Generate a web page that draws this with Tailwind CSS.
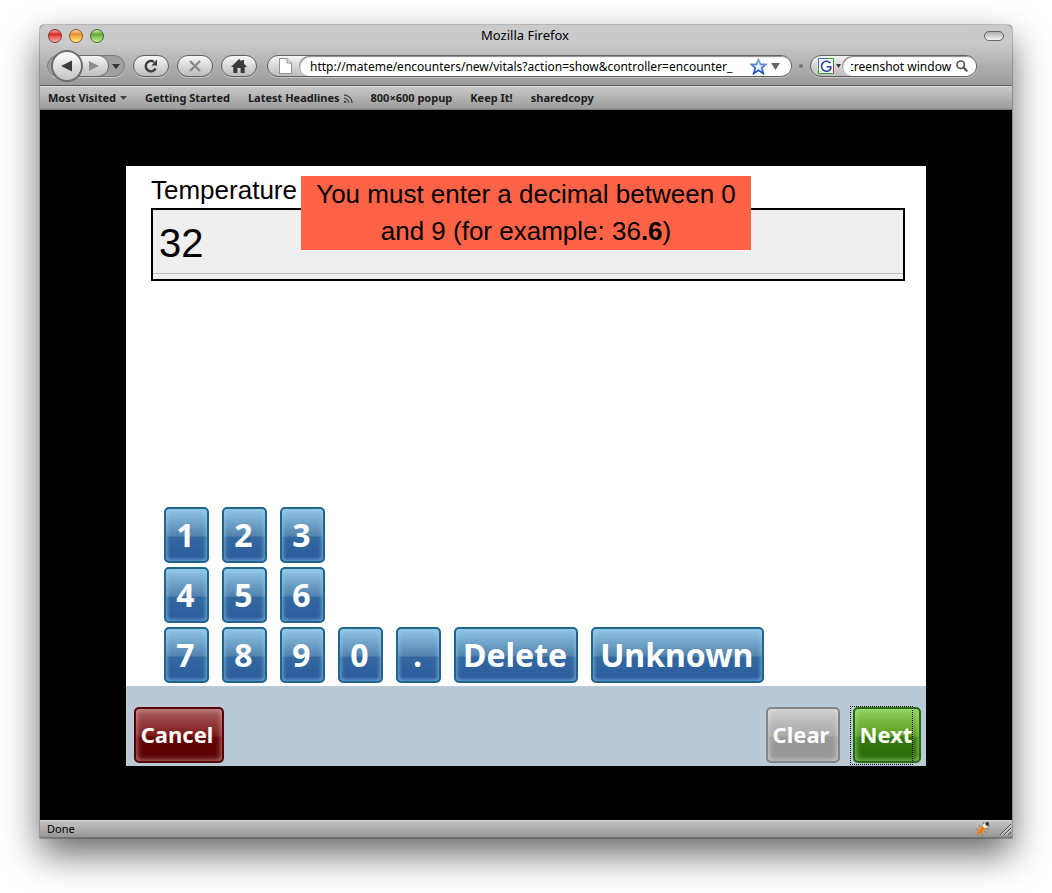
<!DOCTYPE html>
<html lang="en">
<head>
<meta charset="utf-8">
<meta name="viewport" content="width=device-width, initial-scale=1">
<title>Mozilla Firefox</title>
<script src="https://cdn.jsdelivr.net/npm/@tailwindcss/browser@4"></script>
</head>
<body class="flex min-h-screen flex-col bg-white px-10 pt-[25px] pb-[55px] font-['Noto_Sans',sans-serif] text-black">
<div class="flex flex-1 flex-col rounded-t-[4px] bg-black shadow-[0_16px_36px_rgba(0,0,0,0.6),0_0_0_1px_rgba(0,0,0,0.2)]">

  <header class="rounded-t-[4px] border-b border-[#5f5f5f] bg-linear-to-b from-[#cacaca] from-30% to-[#999999]">
    <div class="flex h-6 items-center px-2 pb-[2px]">
      <div class="flex gap-[7px]">
        <button aria-label="Close" class="h-[14px] w-[14px] rounded-full border border-[#7c3434] bg-linear-to-b from-[#f8a0a0] via-[#dc1c22] via-35% to-[#ffb0b0]"></button>
        <button aria-label="Minimize" class="h-[14px] w-[14px] rounded-full border border-[#87572a] bg-linear-to-b from-[#fbd9a8] via-[#e8902c] via-35% to-[#fff27c]"></button>
        <button aria-label="Zoom" class="h-[14px] w-[14px] rounded-full border border-[#3a6530] bg-linear-to-b from-[#cfeeb8] via-[#5fa83a] via-35% to-[#d0f78c]"></button>
      </div>
      <h1 class="flex-1 pr-[38px] text-center text-[13px]">Mozilla Firefox</h1>
      <button aria-label="Toggle toolbar" class="h-[10px] w-5 rounded-full border border-[#666] bg-linear-to-b from-[#b0b0b0] to-[#f4f4f4]"></button>
    </div>

    <div class="flex h-9 items-center gap-2 pt-[2px] pr-[35px] pb-[4px] pl-[7px]">
      <div class="flex h-[22px] w-[78px] items-center rounded-full border border-[#777] bg-[#a0a0a0] pl-[3px] shadow-[0_1px_0_#c8c8c8]">
        <button aria-label="Back" class="z-10 flex h-8 w-8 shrink-0 items-center justify-center rounded-full border-2 border-[#6c6c6c] bg-linear-to-b from-white to-[#c4c4c4]">
          <svg class="h-3 w-3" viewBox="0 0 12 12"><path d="M0 6 11 .5v11z" fill="#3b3b3b"/></svg>
        </button>
        <button aria-label="Forward" class="-ml-2 flex h-[22px] w-[34px] shrink-0 items-center justify-center rounded-r-full border border-[#6a6a6a] bg-linear-to-b from-[#f4f4f4] to-[#c0c0c0] pl-1">
          <svg class="h-[10px] w-[10px]" viewBox="0 0 10 10"><path d="M0 0 10 5 0 10z" fill="#8f8f8f"/></svg>
        </button>
        <button aria-label="History" class="ml-[3px]"><svg class="h-[5px] w-2" viewBox="0 0 8 5"><path d="M0 0h8L4 5z" fill="#333"/></svg></button>
      </div>
      <button aria-label="Reload" class="flex h-[22px] w-9 items-center justify-center rounded-full border border-[#5f5f5f] bg-linear-to-b from-[#f8f8f8] to-[#bcbcbc] shadow-[0_1px_0_#c8c8c8]">
        <svg class="h-[14px] w-[14px]" viewBox="0 0 14 14" fill="none"><path d="M11.600 9.500A5.200 5.200 0 1 1 10 2.900" stroke="#3b3b3b" stroke-width="2.400"/><path d="M13 .6v5.800H7.400z" fill="#3b3b3b"/></svg>
      </button>
      <button aria-label="Stop" class="flex h-[22px] w-9 items-center justify-center rounded-full border border-[#5f5f5f] bg-linear-to-b from-[#f8f8f8] to-[#bcbcbc] shadow-[0_1px_0_#c8c8c8]">
        <svg class="h-3 w-3" viewBox="0 0 12 12"><path d="m1 1 10 10M11 1 1 11" stroke="#8a8a8a" stroke-width="2.400"/></svg>
      </button>
      <button aria-label="Home" class="flex h-[22px] w-9 items-center justify-center rounded-full border border-[#5f5f5f] bg-linear-to-b from-[#f8f8f8] to-[#bcbcbc] shadow-[0_1px_0_#c8c8c8]">
        <svg class="h-[14px] w-4" viewBox="0 0 16 14"><path d="M8 0 10.600 2.500V1H13v3.800L16 8h-2.300v6H9.600V9H6.400v5H2.300V8H0z" fill="#3b3b3b"/></svg>
      </button>

      <div class="ml-[2px] flex h-[22px] min-w-0 flex-1 items-center rounded-full border border-[#606060] bg-linear-to-b from-[#f4f4f4] to-[#bcbcbc] shadow-[0_1px_0_#c8c8c8]">
        <svg class="ml-[11px] h-4 w-[13px] shrink-0" viewBox="0 0 13 16"><path d="M.5.5h7.500l4.500 4.500v10.500H.5z" fill="#fff" stroke="#929292"/><path d="M8 .5V5h4.500" fill="#ddd" stroke="#929292"/></svg>
        <div class="ml-[7px] flex h-5 min-w-0 flex-1 items-center rounded-full bg-white pr-[11px] pl-[11px] shadow-[inset_1px_1px_1px_#888]">
          <input aria-label="Address" value="http://mateme/encounters/new/vitals?action=show&amp;controller=encounter_" class="h-5 min-w-0 flex-1 bg-transparent text-xs outline-none">
          <button aria-label="Bookmark this page"><svg class="h-[17px] w-[17px]" viewBox="0 0 17 17"><defs><linearGradient id="star" x2="0" y2="1"><stop stop-color="#82b0dc"/><stop offset="1" stop-color="#1746cf"/></linearGradient></defs><path d="m8.500 1.300 2 5h5.300l-4.100 3.500 1.500 5.600-4.700-3.100-4.700 3.100 1.500-5.600L1.200 6.300h5.300z" fill="#eaf3fd" stroke="url(#star)" stroke-width="1.700"/></svg></button>
          <button aria-label="Show history" class="ml-1"><svg class="h-[7px] w-[9px]" viewBox="0 0 9 7"><path d="M0 0h9L4.500 7z" fill="#666"/></svg></button>
        </div>
      </div>

      <span class="-mx-px h-1 w-1 rounded-full bg-[#777]"></span>

      <div class="flex h-[22px] w-[167px] items-center rounded-full border border-[#606060] bg-linear-to-b from-[#f4f4f4] to-[#bcbcbc] shadow-[0_1px_0_#c8c8c8]">
        <button aria-label="Search engine" class="ml-[7px] flex items-center gap-[2px]">
          <svg class="h-4 w-4" viewBox="0 0 16 16" fill="none"><path d="M0 0h16v16H0z" fill="#fff"/><path d="M.5 8V.5H8" stroke="#3968d8"/><path d="M8 .5h7.500V8" stroke="#2da12d"/><path d="M15.500 8v7.500" stroke="#d22"/><path d="M.5 8v7.500h15" stroke="#2da12d"/><path d="M12.500 5.200A5 5 0 1 0 12.700 11V8.700H8.600" stroke="#2445a6" stroke-width="1.600"/></svg>
          <svg class="h-1 w-[5px]" viewBox="0 0 5 4"><path d="M0 0h5L2.500 4z" fill="#333"/></svg>
        </button>
        <div class="ml-px flex h-5 min-w-0 flex-1 items-center rounded-full bg-white pr-2 pl-[9px] shadow-[inset_1px_1px_1px_#888]">
          <input aria-label="Search" value="creenshot window" class="h-5 min-w-0 flex-1 bg-transparent indent-[-3px] text-xs outline-none">
          <button aria-label="Search the web"><svg class="h-3 w-3" viewBox="0 0 12 12" fill="none" stroke="#555"><circle cx="4.700" cy="4.700" r="3.700" stroke-width="1.700"/><path d="m7.300 7.300 4 4" stroke-width="2.200"/></svg></button>
        </div>
      </div>
    </div>
  </header>

  <nav aria-label="Bookmarks" class="flex h-6 items-center gap-[18px] border-t border-b border-t-[#d8d8d8] border-b-[#777] bg-linear-to-b from-[#c8c8c8] to-[#9c9c9c] px-2 text-[11px] font-bold text-[#1c1c1c]">
    <button class="flex items-center gap-1">Most Visited<svg class="h-1 w-[7px]" viewBox="0 0 7 4"><path d="M0 0h7L3.500 4z" fill="#444"/></svg></button>
    <a href="#">Getting Started</a>
    <a href="#" class="flex items-center gap-1">Latest Headlines<svg class="h-[9px] w-[9px]" viewBox="0 0 9 9" fill="none" stroke="#444" stroke-width="1.300"><path d="M0 1a8 8 0 0 1 8 8M0 4.200A4.800 4.800 0 0 1 4.800 9"/><circle cx="1.200" cy="7.800" r=".6"/></svg></a>
    <a href="#">800×600 popup</a>
    <a href="#">Keep It!</a>
    <a href="#">sharedcopy</a>
  </nav>

  <main class="flex flex-1 items-center justify-center pt-14 pb-[54px]">
    <form class="relative flex min-h-[600px] w-full max-w-[800px] flex-col bg-white" onsubmit="return false">
      <div class="pt-[7px] pr-[21px] pl-[25px] font-['Liberation_Sans',sans-serif]">
        <label for="temperature" class="block h-[35px] text-[26px] leading-[35px]">Temperature</label>
        <div class="border-2 border-black bg-[#efefef] pb-[5px]">
          <input id="temperature" value="32" class="block h-16 w-full border-b border-[#c0c0c0] bg-transparent px-[6px] pt-1 text-[40px] outline-none">
        </div>
      </div>
      <p role="alert" class="absolute top-[10px] left-1/2 w-[450px] -translate-x-1/2 bg-[#ff6347] text-center font-['Liberation_Sans',sans-serif] text-[26px] leading-[37px]">You must enter a decimal between 0 and 9 (for example: 36<b>.6</b>)</p>

      <div class="mt-auto flex flex-col gap-1 px-[38px] pb-[3px] text-[32px] font-bold text-white [&_button]:h-14 [&_button]:min-w-[45px] [&_button]:rounded-[5px] [&_button]:border-2 [&_button]:border-[#22658c] [&_button]:bg-[linear-gradient(#92c6e6,#5283ae_52%,#33689f_54%,#2b5b9f)] [&_button]:pr-[9px] [&_button]:pl-[7px] [&_button]:leading-none [&_button]:shadow-[inset_0_0_5px_#8fd0ee]">
        <div class="flex gap-[13px]">
          <button type="button">1</button><button type="button">2</button><button type="button">3</button>
        </div>
        <div class="flex gap-[13px]">
          <button type="button">4</button><button type="button">5</button><button type="button">6</button>
        </div>
        <div class="flex gap-[13px]">
          <button type="button">7</button><button type="button">8</button><button type="button">9</button><button type="button">0</button><button type="button">.</button><button type="button">Delete</button><button type="button">Unknown</button>
        </div>
      </div>

      <footer class="flex h-20 items-end bg-[#b9cad6] pr-[5px] pb-[3px] pl-2 text-[22px] font-bold text-white">
        <button type="button" class="h-14 w-[90px] rounded-[5px] border-2 border-[#560606] bg-[linear-gradient(#a86060,#7c1818_52%,#650303_54%,#5a0303)] pr-1 pb-[2px] shadow-[inset_0_0_6px_#d8a0a0]">Cancel</button>
        <button type="button" class="ml-auto h-14 w-[74px] rounded-[5px] border-2 border-[#858585] bg-[linear-gradient(#cecece,#a8a8a8_52%,#999_54%,#969696)] pr-1 pb-[2px] shadow-[inset_0_0_6px_#ddd]">Clear</button>
        <div class="relative ml-[13px]">
          <button type="submit" class="block h-14 w-[68px] rounded-[5px] border-2 border-[#236b0b] bg-[linear-gradient(#8fd05c,#5a9a1c_52%,#34790c_54%,#2d6a0b)] pr-[2px] pb-[2px] shadow-[inset_0_0_6px_#a4e084]">Next</button>
          <span class="pointer-events-none absolute -top-px -left-[3px] h-[59px] w-[63px] border border-dotted border-black"></span>
        </div>
      </footer>
    </form>
  </main>

  <footer class="flex h-[18px] items-center border-t border-[#d5d5d5] border-b border-b-[#737373] bg-linear-to-b from-[#c4c4c4] to-[#969696] px-[7px] text-[11px]">
    <span class="pt-px">Done</span>
    <button aria-label="Firebug" class="mr-2 ml-auto">
      <svg class="h-4 w-4" viewBox="0 0 16 16"><path d="M4 4l2 3M1 8l4 1M2 14l3-2M7 15l0-3M12 12l-3-2M14 8l-4-1M8 1l1 3M15 5l-3 0" stroke="#8a8078" stroke-width="1"/><ellipse cx="6.500" cy="9" rx="2.800" ry="5.500" transform="rotate(42 6.500 9)" fill="#f08c24"/><path d="M3.500 12.500 9 6.500" stroke="#b3541a" stroke-width=".8"/><circle cx="10.300" cy="4.800" r="2.200" fill="#fff"/><circle cx="12.200" cy="2.900" r="1.900" fill="#333"/></svg>
    </button>
    <svg class="-mr-[6px] h-3 w-3" viewBox="0 0 12 12" stroke-width="1"><path d="M1 12 12 1M5 12l7-7M9 12l3-3" stroke="#555"/><path d="M2.200 12.200 12.200 2.200M6.200 12.200l6-6" stroke="#e0e0e0"/></svg>
  </footer>
</div>
</body>
</html>
